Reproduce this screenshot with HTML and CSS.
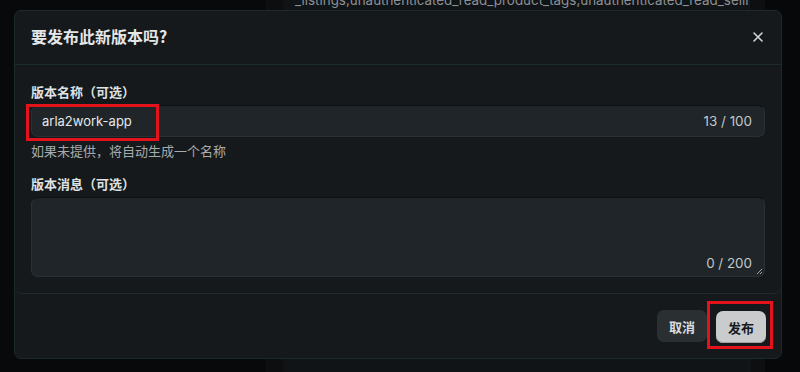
FILE: index.html
```html
<!DOCTYPE html>
<html lang="zh-CN">
<head>
<meta charset="utf-8">
<title>发布新版本</title>
<link rel="stylesheet" href="styles.css">
</head>
<body>
<div class="backdrop">
  <div class="col col-nav"></div>
  <div class="col col-gutter"></div>
  <div class="col col-main"><div class="scope-text">_listings,unauthenticated_read_product_tags,unauthenticated_read_selli</div></div>
  <div class="col col-side"></div>
  <div class="col col-edge"></div>
</div>

<div class="dialog">
  <div class="dialog-header">
    <h2 class="dialog-title">要发布此新版本吗?</h2>
    <button class="close-btn" aria-label="关闭">
      <svg width="12" height="12" viewBox="0 0 12 12"><path d="M2 2 L10 10 M10 2 L2 10" stroke="#d4d7da" stroke-width="1.6" stroke-linecap="round"/></svg>
    </button>
  </div>
  <div class="dialog-body">
    <div class="field-label">版本名称（可选）</div>
    <div class="input">
      <span class="input-value">arla2work-app</span>
      <span class="counter">13 / 100</span>
    </div>
    <div class="hint">如果未提供，将自动生成一个名称</div>
    <div class="field-label second">版本消息（可选）</div>
    <div class="textarea">
      <span class="counter">0 / 200</span>
      <svg class="grip" width="8" height="8" viewBox="0 0 8 8"><path d="M7 2 L2 7 M7 5 L5 7" stroke="#9a9fa4" stroke-width="1"/></svg>
    </div>
  </div>
  <div class="dialog-footer">
    <button class="btn btn-cancel">取消</button>
    <button class="btn btn-primary">发布</button>
  </div>
  <div class="mark mark-input"></div>
  <div class="mark mark-publish"></div>
</div>
</body>
</html>
```
FILE: styles.css
```css
* { box-sizing: border-box; }
html, body {
  margin: 0;
  padding: 0;
  width: 800px;
  height: 372px;
  overflow: hidden;
  background: #08090b;
  font-family: "Inter", "Noto Sans CJK SC", sans-serif;
}
.backdrop {
  display: flex;
  height: 372px;
}
.col { height: 100%; }
.col-nav { width: 266px; background: #08090b; }
.col-gutter { width: 17px; background: #0c0e10; border-left: 1px solid #101316; }
.col-main { width: 466px; background: #111416; overflow: hidden; position: relative; }
.col-side { width: 16px; background: #0d0f11; border-left: 1px solid #16191c; }
.col-edge { flex: 1; background: #07080a; }
.scope-text {
  position: absolute;
  left: 12px;
  top: -8px;
  white-space: nowrap;
  font-family: "Inter", sans-serif;
  font-size: 13.4px;
  color: #8b9095;
}

.dialog {
  position: absolute;
  left: 14px;
  top: 10px;
  width: 768px;
  height: 349px;
  background: #15191b;
  border: 1px solid #1c2a2b;
  border-radius: 7px;
  display: flex;
  flex-direction: column;
}
.dialog-header {
  height: 54px;
  display: flex;
  align-items: center;
  justify-content: space-between;
  padding: 0 16px 2px;
  border-bottom: 1px solid #1d2b2c;
}
.dialog-title {
  margin: 0;
  font-family: "Noto Sans CJK SC", sans-serif;
  font-size: 16px;
  font-weight: 700;
  color: #e4e6e8;
  line-height: 22px;
  padding-bottom: 2px;
}
.close-btn {
  background: none;
  border: 0;
  padding: 0;
  width: 18px;
  height: 18px;
  display: flex;
  align-items: center;
  justify-content: center;
  margin-right: -2px;
}
.dialog-body {
  padding: 17px 16px 16px;
  border-bottom: 1px solid #1d2b2c;
  border-radius: 0 0 7px 7px;
}
.field-label {
  font-family: "Noto Sans CJK SC", sans-serif;
  font-size: 13px;
  font-weight: 700;
  color: #dfe2e4;
  line-height: 20px;
  margin-bottom: 3px;
}
.field-label.second { margin-top: 13px; }
.input {
  height: 32px;
  background: #1f2528;
  border: 1px solid #2a3033;
  border-top-color: #0f1214;
  border-radius: 7px;
  display: flex;
  align-items: center;
  justify-content: space-between;
  padding: 0 12px 0 10px;
}
.input-value {
  font-size: 13px;
  color: #e6e8ea;
}
.counter {
  font-size: 13.4px;
  color: #c4c8cb;
}
.hint {
  font-family: "Noto Sans CJK SC", sans-serif;
  font-size: 13px;
  line-height: 20px;
  color: #a6abaf;
  margin-top: 4px;
}
.textarea {
  position: relative;
  height: 80px;
  background: #1f2528;
  border: 1px solid #2a3033;
  border-top-color: #0f1214;
  border-radius: 7px;
  display: flex;
  align-items: flex-end;
  justify-content: flex-end;
  padding: 0 12px 5px;
}
.grip {
  position: absolute;
  right: 1px;
  bottom: 1px;
}
.dialog-footer {
  flex: 1;
  display: flex;
  justify-content: flex-end;
  align-items: flex-start;
  gap: 9px;
  padding: 16px 15px 0;
}
.btn {
  height: 32px;
  padding: 0 12px;
  border: 0;
  border-radius: 7px;
  font-family: "Noto Sans CJK SC", sans-serif;
  font-size: 13px;
  font-weight: 700;
}
.btn-cancel {
  background: #2a2f32;
  color: #d9dcde;
}
.btn-primary {
  background: #c9cbcd;
  color: #16191b;
  box-shadow: inset 0 -1px 0 #9fa2a5;
  margin-top: 1px;
}
.mark {
  position: absolute;
  border: 3px solid #e3121b;
  pointer-events: none;
}
.mark-input {
  left: 11px;
  top: 93px;
  width: 133px;
  height: 37px;
}
.mark-publish {
  left: 692px;
  top: 290px;
  width: 66px;
  height: 48px;
}
```
